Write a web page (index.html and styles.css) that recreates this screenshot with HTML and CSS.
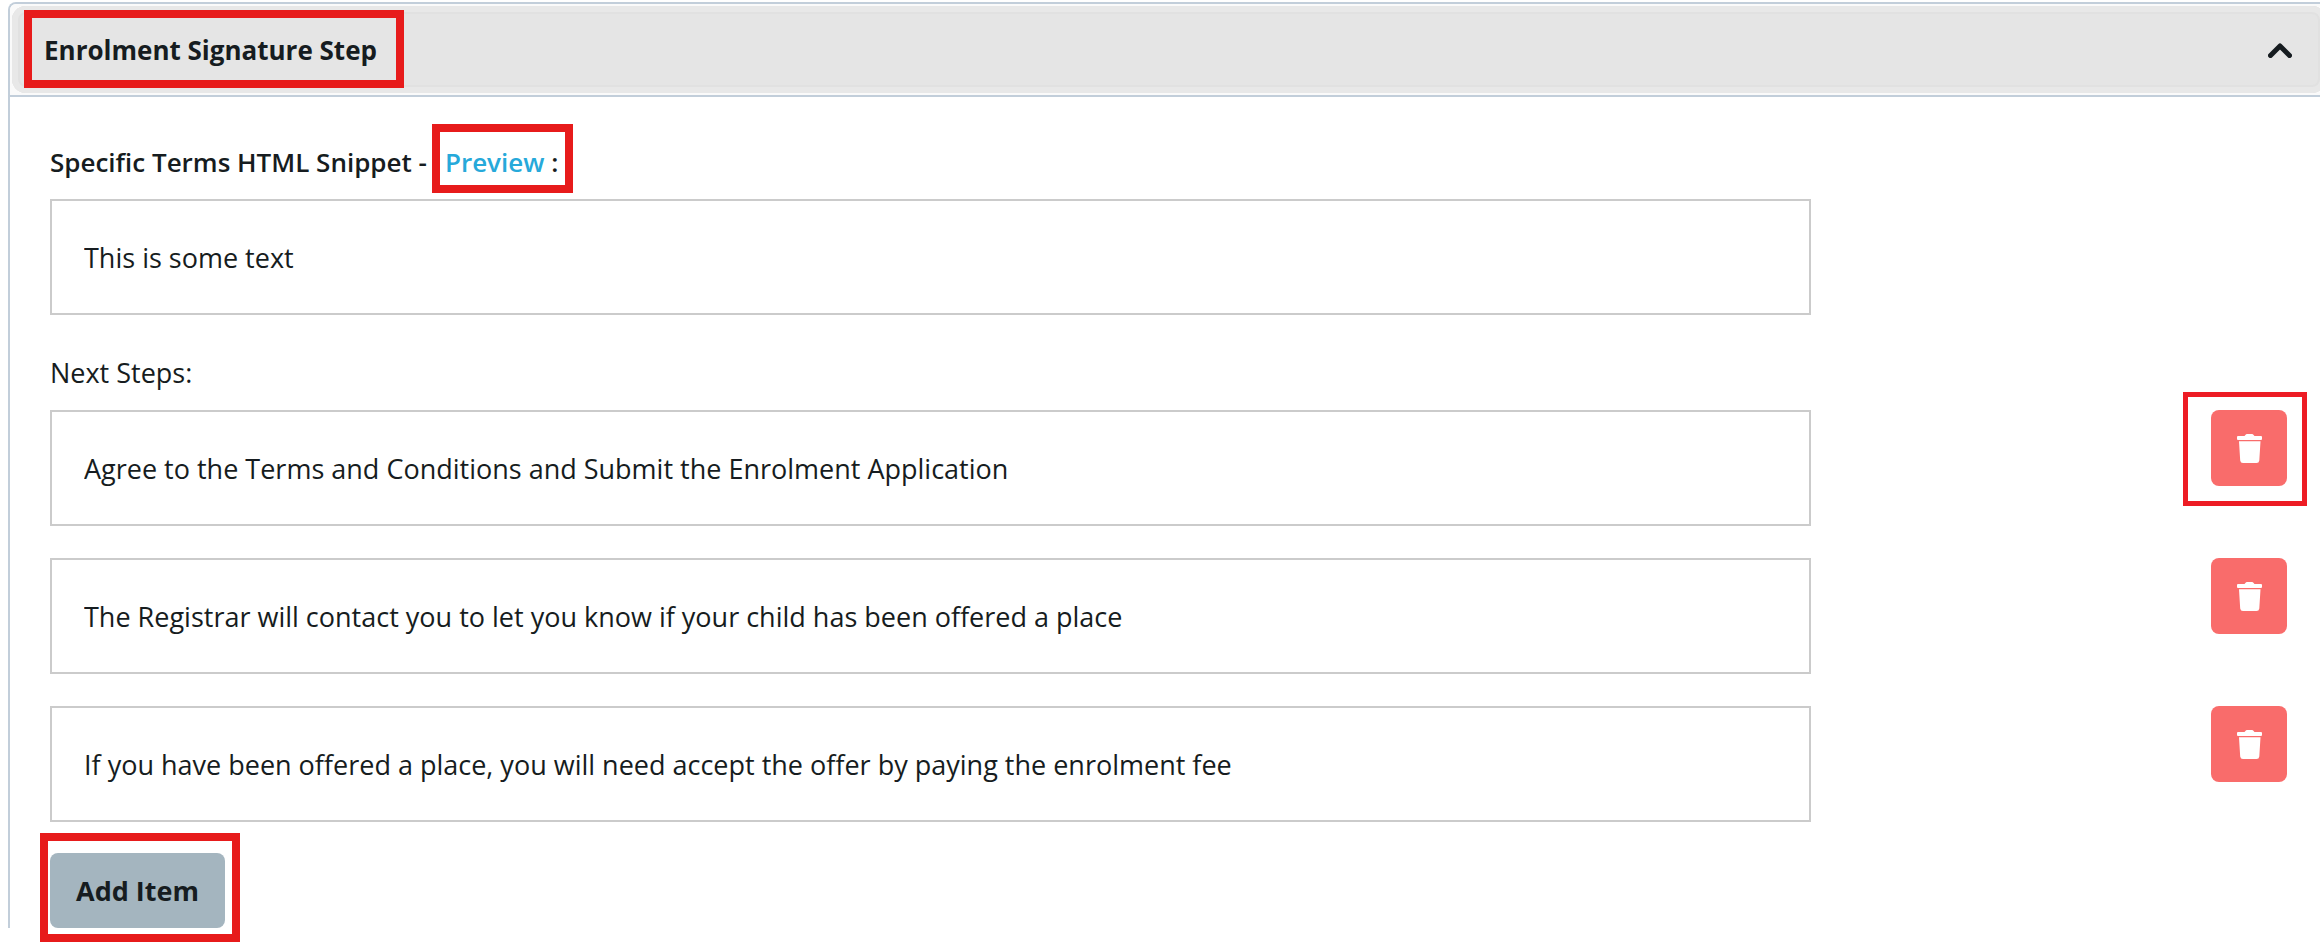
FILE: index.html
```html
<!DOCTYPE html>
<html lang="en">
<head>
<meta charset="utf-8">
<meta name="viewport" content="width=device-width, initial-scale=1">
<title>Enrolment Signature Step</title>
<link rel="stylesheet" href="styles.css">
</head>
<body>
<svg class="sprite" aria-hidden="true">
  <symbol id="trash" viewBox="0 0 25 29">
    <path d="M1 2H7.500L8.600.7Q9 0 10 0H15Q16 0 16.400.7L17.500 2H24Q25 2 25 3V5Q25 6 24 6H1Q0 6 0 5V3Q0 2 1 2ZM2 7.200H23.500L22.300 26.500Q22 29 19.500 29H6Q3.500 29 3.200 26.500Z"/>
  </symbol>
</svg>
<main class="panel">
  <div class="panel-head">
    <button class="toggle" type="button" aria-expanded="true" aria-controls="step-body">
      <span class="toggle-title marked">Enrolment Signature Step</span>
      <svg class="chevron" viewBox="0 0 24 15" aria-hidden="true"><path d="M2.500 12.500L12 3L21.500 12.500"/></svg>
    </button>
  </div>
  <div class="panel-body" id="step-body">
    <div class="row-label row-label-strong">
      <label for="terms">Specific Terms HTML Snippet -</label>
      <span class="preview marked"><a href="#preview">Preview</a> :</span>
    </div>
    <div class="row">
      <input class="field" id="terms" type="text" value="This is some text">
    </div>
    <div class="row-label row-label-next" id="next-steps">Next Steps:</div>
    <div class="steps">
      <div class="row">
        <input class="field" type="text" aria-labelledby="next-steps" value="Agree to the Terms and Conditions and Submit the Enrolment Application">
        <button class="delete marked" type="button" aria-label="Delete step 1"><svg class="trash"><use href="#trash"/></svg></button>
      </div>
      <div class="row">
        <input class="field" type="text" aria-labelledby="next-steps" value="The Registrar will contact you to let you know if your child has been offered a place">
        <button class="delete" type="button" aria-label="Delete step 2"><svg class="trash"><use href="#trash"/></svg></button>
      </div>
      <div class="row">
        <input class="field" type="text" aria-labelledby="next-steps" value="If you have been offered a place, you will need accept the offer by paying the enrolment fee">
        <button class="delete" type="button" aria-label="Delete step 3"><svg class="trash"><use href="#trash"/></svg></button>
      </div>
    </div>
    <button class="add marked" type="button">Add Item</button>
  </div>
</main>
</body>
</html>
```
FILE: styles.css
```css
* {
  box-sizing: border-box;
}

body {
  min-height: 100vh;
  margin: 0;
  padding: 2px 0 14px 8px;
  background: #fff;
  color: #161c20;
  font: 27px/40px "Open Sans", "Noto Sans", sans-serif;
  overflow-x: hidden;
}

button,
input {
  font: inherit;
  color: inherit;
}

.sprite {
  display: none;
}

/* The panel runs past the right edge of the window. */
.panel {
  margin-right: -10px;
  border: 2px solid #c2ceda;
  border-bottom: 0;
  border-radius: 8px 8px 0 0;
}

.panel-head {
  padding: 2px;
  border-bottom: 2px solid #c2ceda;
  border-radius: 6px 6px 0 0;
  background: #fafafa;
}

.toggle {
  display: flex;
  align-items: center;
  justify-content: space-between;
  width: 100%;
  height: 87px;
  padding: 1px 34px 0 32px;
  border: 0;
  border-radius: 14px;
  background: #e5e5e5;
  box-shadow: inset 0 0 0 6px #e8e8e8, inset 0 0 0 8px #e1e1e1;
  font-size: 26px;
  font-weight: 700;
}

/* Red highlight frames */
.marked {
  position: relative;
}

.marked::after {
  content: "";
  position: absolute;
  border: 8px solid #e71b1b;
  pointer-events: none;
}

.toggle-title::after {
  inset: -20px -27px -18px -20px;
}

.chevron {
  width: 24px;
  height: 15px;
  fill: none;
  stroke: #161c20;
  stroke-width: 5;
  stroke-linecap: round;
  stroke-linejoin: round;
}

.panel-body {
  padding: 45px 41px 0 40px;
}

.row-label {
  margin-bottom: 17px;
}

.row-label-strong {
  display: flex;
  gap: 18px;
  font-size: 26px;
  font-weight: 600;
}

.row-label-next {
  margin-top: 38px;
}

.preview::after {
  inset: -18px -15px -11px -13px;
}

.preview a {
  color: #26a9da;
  text-decoration: none;
}

.row {
  display: grid;
  grid-template-columns: 37fr 10fr;
}

.field {
  width: 100%;
  height: 116px;
  padding: 0 32px;
  border: 2px solid #cbcbcb;
  border-radius: 0;
  background: #fff;
  outline: 0;
}

.steps {
  display: grid;
  gap: 32px;
}

.delete {
  display: grid;
  place-items: center;
  justify-self: end;
  width: 76px;
  height: 76px;
  padding: 0;
  border: 0;
  border-radius: 8px;
  background: #f96c6b;
}

.delete::after {
  inset: -18px -20px -20px -28px;
  border: 5px solid #ed1c24;
}

.trash {
  width: 25px;
  height: 29px;
  fill: #fff;
}

.add {
  display: block;
  height: 75px;
  margin-top: 31px;
  padding: 0 26px;
  border: 0;
  border-radius: 8px;
  background: #a4b5bf;
  font-weight: 700;
}

.add::after {
  inset: -20px -15px -14px -10px;
}
```
